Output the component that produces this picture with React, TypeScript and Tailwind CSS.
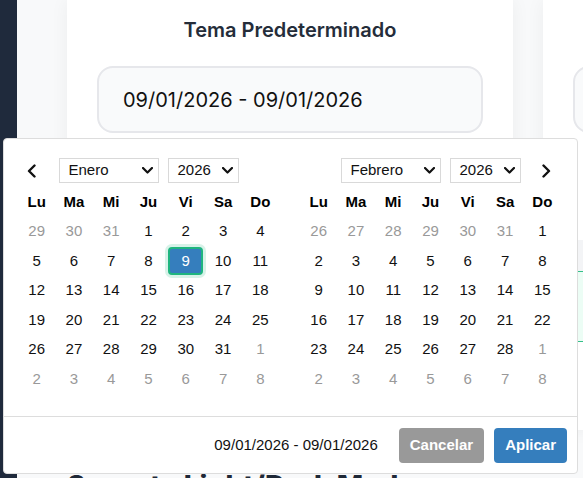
import React from "react";

type Day = { n: number; off: boolean; selected?: boolean };

const weekdays = ["Lu", "Ma", "Mi", "Ju", "Vi", "Sa", "Do"];

// builds a 6x7 grid, weeks start on Monday
function buildMonth(year: number, month: number, selected?: number): Day[] {
  const first = new Date(year, month, 1);
  const lead = (first.getDay() + 6) % 7;
  const daysInMonth = new Date(year, month + 1, 0).getDate();
  const prevDays = new Date(year, month, 0).getDate();
  const out: Day[] = [];
  for (let i = lead; i > 0; i--) out.push({ n: prevDays - i + 1, off: true });
  for (let d = 1; d <= daysInMonth; d++) out.push({ n: d, off: false, selected: d === selected });
  let next = 1;
  while (out.length < 42) out.push({ n: next++, off: true });
  return out;
}

function Chevron({ dir }: { dir: "left" | "right" | "down" }) {
  if (dir === "down") {
    return (
      <svg width="11" height="7" viewBox="0 0 11 7" fill="none">
        <path d="M1 1l4.5 4.5L10 1" stroke="#111" strokeWidth="2.2" strokeLinecap="round" strokeLinejoin="round" />
      </svg>
    );
  }
  return (
    <svg width="9" height="14" viewBox="0 0 9 14" fill="none">
      <path
        d={dir === "left" ? "M7.5 1.5L2 7l5.5 5.5" : "M1.5 1.5L7 7l-5.5 5.5"}
        stroke="#111"
        strokeWidth="2.4"
        strokeLinecap="round"
        strokeLinejoin="round"
      />
    </svg>
  );
}

function FakeSelect({ label, width }: { label: string; width: string }) {
  return (
    <div className={`${width} h-[25px] border border-[#d9d9d9] bg-white flex items-center justify-between pl-[8px] pr-[5px] text-[15px] text-[#111]`}>
      <span>{label}</span>
      <Chevron dir="down" />
    </div>
  );
}

function Calendar({ month, year, days, side }: { month: string; year: string; days: Day[]; side: "left" | "right" }) {
  return (
    <div className="w-[261px]">
      <div className="grid grid-cols-7 h-[33px] items-center">
        <div className="flex justify-start pl-[9px]">{side === "left" && <Chevron dir="left" />}</div>
        <div className="col-span-5 flex justify-center gap-[9px] pl-[2px]">
          <FakeSelect label={month} width="w-[100px]" />
          <FakeSelect label={year} width="w-[71px]" />
        </div>
        <div className="flex justify-end pr-[10px]">{side === "right" && <Chevron dir="right" />}</div>
      </div>
      <div className="grid grid-cols-7">
        {weekdays.map((w) => (
          <div key={w} className="h-[29.5px] flex items-center justify-center font-bold text-[15px] text-black">
            {w}
          </div>
        ))}
        {days.map((d, i) => (
          <div key={i} className="h-[29.5px] flex items-center justify-center">
            {d.selected ? (
              <span className="w-[35px] h-[28px] flex items-center justify-center rounded-[4px] bg-[#357ebd] text-white text-[15px] border-2 border-[#1fb57f] shadow-[0_0_0_3px_rgba(31,181,127,0.18)]">
                {d.n}
              </span>
            ) : (
              <span className={`text-[15px] ${d.off ? "text-[#999]" : "text-[#111]"}`}>{d.n}</span>
            )}
          </div>
        ))}
      </div>
    </div>
  );
}

export default function App() {
  const jan = buildMonth(2026, 0, 9);
  const feb = buildMonth(2026, 1);

  return (
    <div className="relative w-[583px] h-[478px] overflow-hidden flex bg-[#f8f9fa]" style={{ fontFamily: "Inter, 'Noto Sans', sans-serif" }}>
      {/* Sidebar */}
      <aside className="w-[17px] shrink-0 bg-[#1f2a3c]" />

      {/* Main */}
      <main className="flex-1 pl-[50px]">
        <div className="grid grid-cols-[446px_446px] gap-[30px] h-[430px]">
          <div className="bg-white shadow-[0_0_18px_rgba(0,0,0,0.05)] px-[30px] pt-[16px]">
            <h3 className="text-[20px] leading-[28px] font-semibold text-[#252d3a] text-center">Tema Predeterminado</h3>
            <div className="mt-[22px] h-[67px] rounded-[16px] border-2 border-[#e6e7eb] bg-[#f9fafb] flex items-center pl-[24px] text-[20px] text-[#111]">
              09/01/2026 - 09/01/2026
            </div>
          </div>
          <div className="bg-white shadow-[0_0_18px_rgba(0,0,0,0.05)] px-[30px] pt-[16px]">
            <div className="h-[28px]" />
            <div className="mt-[22px] h-[67px] rounded-[16px] border-2 border-[#e6e7eb] bg-[#f9fafb]" />
            <div className="mt-[107px]">
              <div className="h-[31px] bg-[#f3f4f6]" />
              <div className="h-[71px] bg-[#ecfdf5] border-y border-[#34c08a]" />
            </div>
          </div>
        </div>
        <h2 className="mt-[38px] text-[28px] leading-[36px] font-extrabold text-[#1f2937]">Soporte Light/Dark Mode</h2>
      </main>

      {/* Date range picker popup */}
      <div
        className="absolute left-[3px] top-[138px] w-[575px] bg-white border border-[#ddd] rounded-[4px]"
        style={{ fontFamily: "'Liberation Sans', Arial, sans-serif" }}
      >
        <div className="flex gap-[21px] pl-[14px] pt-[15px] pb-[22px]">
          <Calendar month="Enero" year="2026" days={jan} side="left" />
          <Calendar month="Febrero" year="2026" days={feb} side="right" />
        </div>
        <div className="border-t border-[#ddd] flex items-center justify-end gap-[10px] pt-[11px] pb-[10px] pr-[10px]">
          <span className="text-[15px] text-[#111] mr-[11px]">09/01/2026 - 09/01/2026</span>
          <button className="h-[35px] px-[11px] rounded-[4px] bg-[#999] text-white font-bold text-[15px]">Cancelar</button>
          <button className="h-[35px] px-[11px] rounded-[4px] bg-[#357ebd] text-white font-bold text-[15px]">Aplicar</button>
        </div>
      </div>
    </div>
  );
}
